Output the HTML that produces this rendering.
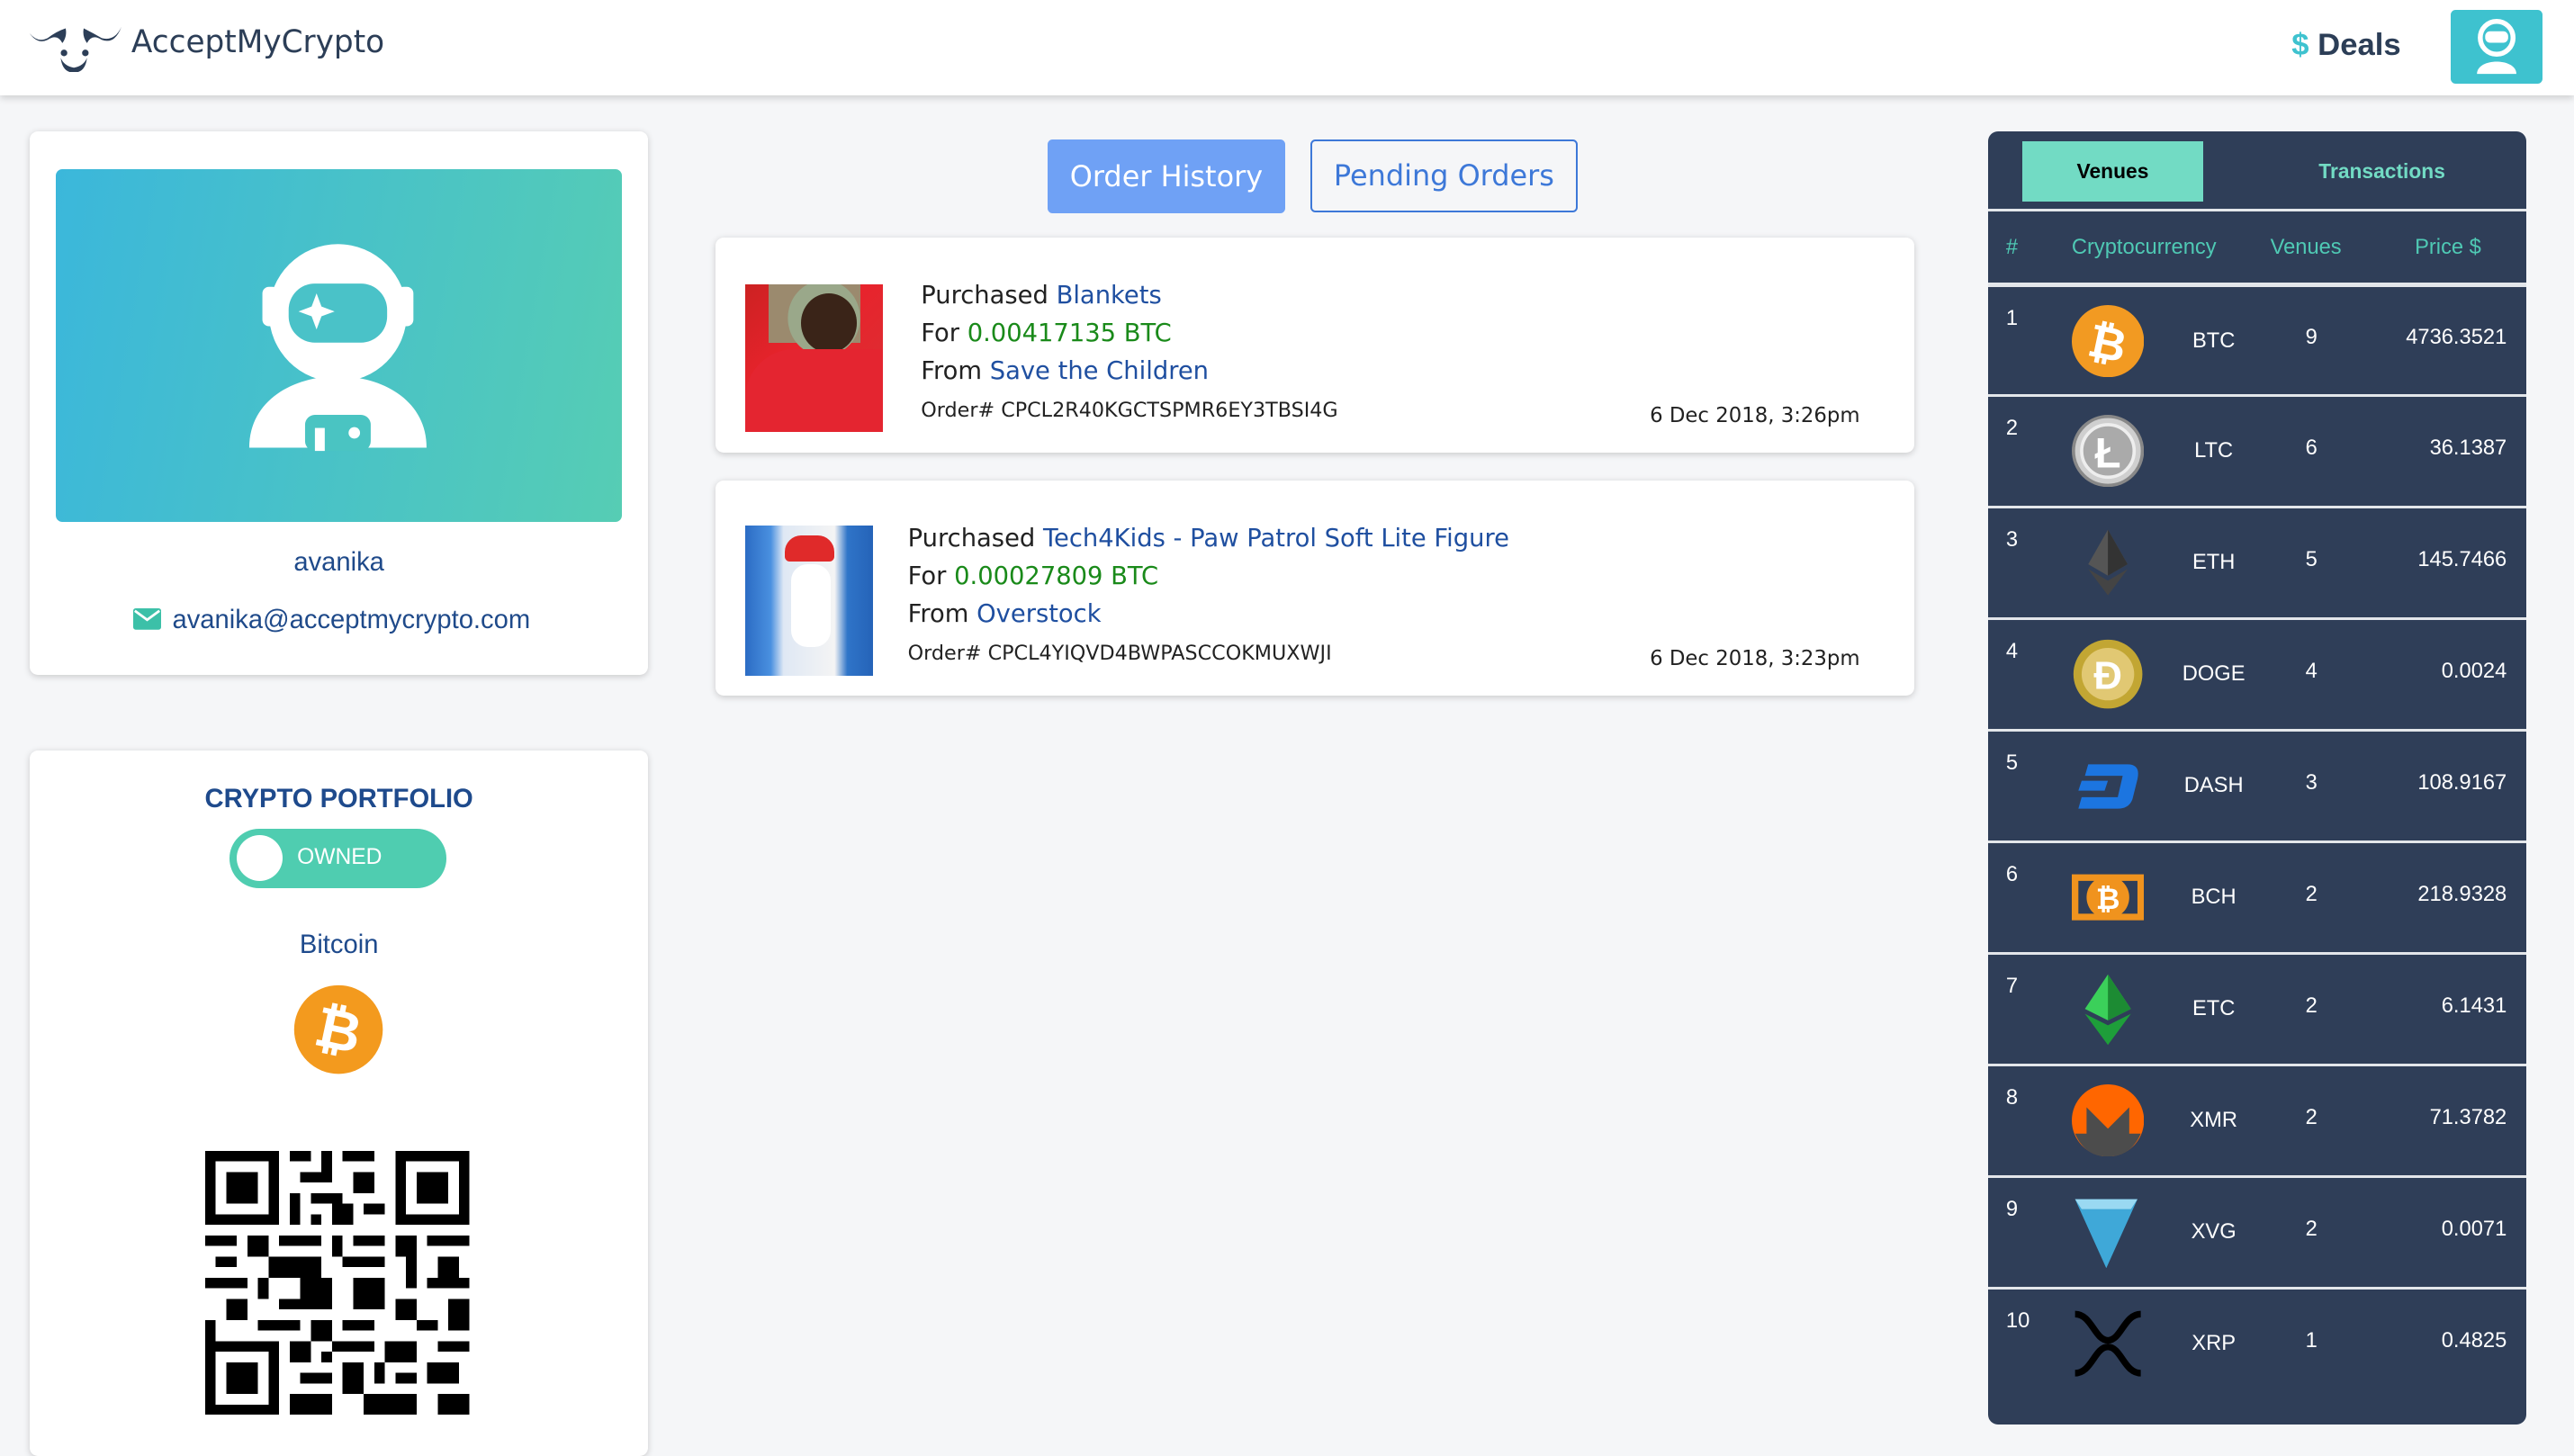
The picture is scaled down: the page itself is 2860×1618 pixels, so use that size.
<!DOCTYPE html>
<html><head><meta charset="utf-8"><style>
html{zoom:1.824}
body{margin:0;width:1568px;height:870px;background:#f5f6f8;font-family:"Liberation Sans",sans-serif;position:relative;overflow:hidden}
.abs{position:absolute}
.hdr{left:0;top:0;width:1568px;height:58px;background:#fff;box-shadow:0 2px 4px rgba(0,0,0,.15)}
.card{background:#fff;border-radius:5px;box-shadow:0 1px 4px rgba(0,0,0,.18)}
.ord{font-family:"DejaVu Sans",sans-serif;font-size:15px;color:#222;line-height:23px}
.ord .b{color:#1f4fa0}.ord .g{color:#1a8a1a}
.ord .n{font-size:12.2px;margin-top:1px}
.dt{font-family:"DejaVu Sans",sans-serif;font-size:12.5px;color:#222}
.panel{left:1211px;top:80px;width:328px;height:788px;background:#2f3e58;border-radius:6px;overflow:hidden}
.row{position:absolute;left:0;width:328px;height:66px;border-top:2px solid #e3e6ea;color:#fff;font-size:13px}
.row .i{position:absolute;left:11px;top:12px}
.row .s{position:absolute;left:100px;width:75px;text-align:center;top:26px}
.row .v{position:absolute;left:187px;width:20px;text-align:center;top:24px}
.row .p{position:absolute;right:12px;top:24px}
.row svg{position:absolute;left:51px;top:11px}
</style></head><body>
<div class="abs hdr">
 <svg class="abs" style="left:17px;top:14px" width="58" height="30" viewBox="0 0 58 30"><path d="M1 6 Q6 12 12 9 Q17 5 23 3 Q24 8 21 12 Q18 6 12 10 Q6 13 1 6Z" fill="#2c3e57"/><path d="M57 2 Q53 11 45 9 Q40 6 34 3 Q33 8 36 12 Q39 6 45 10 Q53 13 57 2Z" fill="#2c3e57"/><circle cx="22" cy="18" r="2" fill="#2c3e57"/><circle cx="35" cy="18" r="2" fill="#2c3e57"/><path d="M20 21 Q21 30 28 30 Q35 30 36 21 Q34 26 28 27 Q22 26 20 21Z" fill="#2c3e57"/></svg>
 <div class="abs" style="left:80px;top:15px;font-family:'DejaVu Sans',sans-serif;font-size:18.8px;color:#2c3e57">AcceptMyCrypto</div>
 <div class="abs" style="left:1396px;top:17px;font-size:19px;font-weight:bold;color:#2c3e57"><span style="color:#3ec2cf">$</span> Deals</div>
 <div class="abs" style="left:1493px;top:6px;width:56px;height:45px;background:#3ec2cf;border-radius:3px">
  <svg width="56" height="45" viewBox="0 0 56 45"><circle cx="28" cy="17" r="10" fill="none" stroke="#fff" stroke-width="3"/><rect x="21" y="13" width="14" height="7" rx="3" fill="#fff"/><path d="M16 39 C16 29 40 29 40 39Z" fill="#fff"/></svg>
 </div>
</div>

<div class="abs card" style="left:18px;top:80px;width:377px;height:331px">
 <div class="abs" style="left:16px;top:23px;width:345px;height:215px;border-radius:4px;background:linear-gradient(100deg,#3bb7db,#56cdb4)">
  <svg class="abs" style="left:112px;top:42px" width="120" height="130" viewBox="0 0 120 130"><circle cx="60" cy="46" r="42" fill="#fff"/><rect x="14" y="30" width="10" height="24" rx="4" fill="#fff"/><rect x="96" y="30" width="10" height="24" rx="4" fill="#fff"/><rect x="30" y="28" width="60" height="36" rx="16" fill="#4ac2c8"/><path d="M47 34 l3 8 8 3 -8 3 -3 8 -3 -8 -8 -3 8 -3z" fill="#fff"/><path d="M6 128 C6 70 114 70 114 128Z" fill="#fff"/><rect x="40" y="108" width="40" height="22" rx="6" fill="#4ac4c2"/><rect x="46" y="116" width="6" height="14" fill="#fff"/><circle cx="70" cy="119" r="3.5" fill="#fff"/></svg>
 </div>
 <div class="abs" style="left:0;width:377px;top:254px;text-align:center;font-size:16px;color:#1f4a8a">avanika</div>
 <div class="abs" style="left:63px;top:289px;font-size:16px;color:#1f4a8a;white-space:nowrap"><svg width="17" height="13" viewBox="0 0 17 13" style="vertical-align:-1px;margin-right:7px"><rect width="17" height="13" rx="1.5" fill="#3cc0a8"/><path d="M1 1.5 L8.5 7 L16 1.5" fill="none" stroke="#fff" stroke-width="1.5"/></svg>avanika@acceptmycrypto.com</div>
</div>

<div class="abs card" style="left:18px;top:457px;width:377px;height:430px">
 <div class="abs" style="left:0;width:377px;top:21px;text-align:center;font-size:16px;font-weight:bold;color:#1e4a8c">CRYPTO PORTFOLIO</div>
 <div class="abs" style="left:122px;top:48px;width:132px;height:36px;border-radius:18px;background:#4fcdb0">
  <div class="abs" style="left:4px;top:4px;width:28px;height:28px;border-radius:14px;background:#fff"></div>
  <div class="abs" style="left:41px;top:10px;color:#fff;font-size:13.5px">OWNED</div>
 </div>
 <div class="abs" style="left:0;width:377px;top:110px;text-align:center;font-size:16px;color:#1e4a8c">Bitcoin</div>
 <svg class="abs" style="left:160px;top:142px" width="56" height="56" viewBox="0 0 56 56"><circle cx="28" cy="28" r="27" fill="#f39a1e"/><text x="28" y="40" text-anchor="middle" font-family="Liberation Sans" font-weight="bold" font-size="34" fill="#fff" transform="rotate(12 28 28)">₿</text></svg>
 <svg class="abs" style="left:107px;top:244px" width="161" height="161" viewBox="0 0 25 25" shape-rendering="crispEdges">
  <g fill="#000">
   <path d="M0 0h7v7h-7zM18 0h7v7h-7zM0 18h7v7h-7z"/>
  </g>
  <g fill="#fff"><path d="M1 1h5v5h-5zM19 1h5v5h-5zM1 19h5v5h-5z"/></g>
  <g fill="#000"><path d="M2 2h3v3h-3zM20 2h3v3h-3zM2 20h3v3h-3z"/>
   <path d="M8 0h2v1h-2zM11 0h1v2h-1zM13 0h3v1h-3zM9 2h3v1h-3zM14 2h2v2h-2zM8 4h1v3h-1zM10 4h3v1h-3zM12 5h2v2h-2zM15 5h2v1h-2zM10 6h1v1h-1z"/>
   <path d="M0 8h3v1h-3zM4 8h2v2h-2zM7 8h4v1h-4zM12 8h1v2h-1zM14 8h3v1h-3zM18 8h2v2h-2zM21 8h4v1h-4zM1 10h2v1h-2zM6 10h5v2h-5zM13 10h4v1h-4zM19 10h1v3h-1zM22 10h2v2h-2z"/>
   <path d="M0 12h4v1h-4zM5 12h1v2h-1zM9 12h3v2h-3zM14 12h3v3h-3zM21 12h4v1h-4zM2 14h2v2h-2zM7 14h5v1h-5zM18 14h2v2h-2zM23 14h2v3h-2zM0 16h1v2h-1zM5 16h4v1h-4zM10 16h2v2h-2zM13 16h3v1h-3zM20 16h2v1h-2z"/>
   <path d="M8 18h2v2h-2zM12 18h4v1h-4zM17 18h3v2h-3zM22 18h3v1h-3zM9 21h3v1h-3zM13 20h2v3h-2zM16 20h1v2h-1zM21 20h3v2h-3zM8 23h4v2h-4zM15 23h5v2h-5zM18 21h2v1h-2zM22 23h3v2h-3zM11 19h1v1h-1z"/>
  </g>
 </svg>
</div>

<div class="abs" style="left:638px;top:85px;width:145px;height:45px;background:#6fa1f5;border-radius:3px;color:#fff;text-align:center;line-height:45px;font-family:'DejaVu Sans',sans-serif;font-size:17.5px">Order History</div>
<div class="abs" style="left:798px;top:85px;width:161px;height:42px;border:1.5px solid #3d78d8;border-radius:3px;color:#3d78d8;text-align:center;line-height:42px;font-family:'DejaVu Sans',sans-serif;font-size:17.5px">Pending Orders</div>

<div class="abs card" style="left:436px;top:145px;width:730px;height:131px">
 <div class="abs" style="left:18px;top:28px;width:84px;height:90px;background:linear-gradient(135deg,#c22 0%,#e8232c 40%,#e02a30 70%,#c21d26 100%);overflow:hidden">
  <div class="abs" style="left:14px;top:-4px;width:56px;height:40px;background:#9b8a6e"></div>
  <div class="abs" style="left:34px;top:6px;width:34px;height:36px;border-radius:50%;background:#3a2418;box-shadow:-3px -3px 0 5px #9aa88a"></div>
  <div class="abs" style="left:0;top:40px;width:84px;height:50px;background:#e42530;border-radius:30px 0 0 0"></div>
 </div>
 <div class="abs ord" style="left:125px;top:24px">Purchased <span class="b">Blankets</span><br>For <span class="g">0.00417135 BTC</span><br>From <span class="b">Save the Children</span><div class="n">Order# CPCL2R40KGCTSPMR6EY3TBSI4G</div></div>
 <div class="abs dt" style="left:569px;top:101px">6 Dec 2018, 3:26pm</div>
</div>
<div class="abs card" style="left:436px;top:293px;width:730px;height:131px">
 <div class="abs" style="left:18px;top:27px;width:78px;height:92px;background:linear-gradient(90deg,#2b6cc4,#4a90e0 20%,#dfe8f4 30%,#f4f4f4 70%,#2f74c8 80%,#2563b8)">
  <div class="abs" style="left:24px;top:6px;width:30px;height:16px;border-radius:10px 10px 3px 3px;background:#e02a2a"></div>
  <div class="abs" style="left:28px;top:24px;width:24px;height:50px;border-radius:10px;background:#fff"></div>
 </div>
 <div class="abs ord" style="left:117px;top:24px">Purchased <span class="b">Tech4Kids - Paw Patrol Soft Lite Figure</span><br>For <span class="g">0.00027809 BTC</span><br>From <span class="b">Overstock</span><div class="n">Order# CPCL4YIQVD4BWPASCCOKMUXWJI</div></div>
 <div class="abs dt" style="left:569px;top:101px">6 Dec 2018, 3:23pm</div>
</div>

<div class="abs panel">
 <div class="abs" style="left:21px;top:6px;width:110px;height:37px;background:#72dbc4;color:#000;font-weight:bold;font-size:12.5px;text-align:center;line-height:37px">Venues</div>
 <div class="abs" style="left:185px;top:6px;width:110px;line-height:37px;text-align:center;color:#72dbc4;font-weight:bold;font-size:12.5px">Transactions</div>
 <div class="abs" style="left:0;top:47px;width:328px;height:45px;border-top:2px solid #e3e6ea;color:#4fc9b4;font-size:13px">
  <span class="abs" style="left:11px;top:15px">#</span><span class="abs" style="left:51px;top:15px">Cryptocurrency</span><span class="abs" style="left:172px;top:15px">Venues</span><span class="abs" style="left:260px;top:15px">Price $</span>
 </div>
 <div class="row" style="top:92px;border-top-width:3px"><span class="i">1</span><svg width="44" height="44"><circle cx="22" cy="22" r="22" fill="#f29a22"/><text x="22" y="33" text-anchor="middle" font-family="Liberation Sans" font-weight="bold" font-size="28" fill="#fff" transform="rotate(12 22 22)">₿</text></svg><span class="s">BTC</span><span class="v">9</span><span class="p">4736.3521</span></div>
 <div class="row" style="top:160px"><span class="i">2</span><svg width="44" height="44"><circle cx="22" cy="22" r="21" fill="#cfcfcf" stroke="#888" stroke-width="2"/><circle cx="22" cy="22" r="16" fill="#aaa" stroke="#eee" stroke-width="2"/><text x="22" y="32" text-anchor="middle" font-family="Liberation Sans" font-weight="bold" font-size="26" fill="#fff">Ł</text></svg><span class="s">LTC</span><span class="v">6</span><span class="p">36.1387</span></div>
 <div class="row" style="top:228px"><span class="i">3</span><svg width="44" height="44"><path d="M22 2 L34 23 L22 30 L10 23Z" fill="#555"/><path d="M22 2 L34 23 L22 30Z" fill="#333"/><path d="M22 33 L34 26 L22 42 L10 26Z" fill="#444"/></svg><span class="s">ETH</span><span class="v">5</span><span class="p">145.7466</span></div>
 <div class="row" style="top:296px"><span class="i">4</span><svg width="44" height="44"><circle cx="22" cy="22" r="21" fill="#c2a633"/><circle cx="22" cy="22" r="16" fill="#e1c873"/><text x="22" y="31" text-anchor="middle" font-family="Liberation Sans" font-weight="bold" font-size="24" fill="#fff">Ð</text></svg><span class="s">DOGE</span><span class="v">4</span><span class="p">0.0024</span></div>
 <div class="row" style="top:364px"><span class="i">5</span><svg width="44" height="44"><path d="M10 9 H34 Q42 9 40 18 L37 30 Q35 36 28 36 H4 L6 29 H28 L31 16 H8Z" fill="#1c75e0"/><path d="M6 19 H22 L20 25 H4Z" fill="#1c75e0"/></svg><span class="s">DASH</span><span class="v">3</span><span class="p">108.9167</span></div>
 <div class="row" style="top:432px"><span class="i">6</span><svg width="44" height="44"><rect x="0" y="8" width="44" height="28" fill="#f0931e"/><rect x="4" y="12" width="36" height="20" fill="#2f3e58"/><circle cx="22" cy="22" r="13" fill="#f0931e"/><text x="22" y="29" text-anchor="middle" font-family="Liberation Sans" font-weight="bold" font-size="18" fill="#fff">₿</text></svg><span class="s">BCH</span><span class="v">2</span><span class="p">218.9328</span></div>
 <div class="row" style="top:500px"><span class="i">7</span><svg width="44" height="44"><path d="M22 1 L36 22 L22 29 L8 22Z" fill="#3bd05a"/><path d="M22 32 L36 25 L22 44 L8 25Z" fill="#1e9e3a"/><path d="M22 1 L36 22 L22 29Z" fill="#1c8b33"/></svg><span class="s">ETC</span><span class="v">2</span><span class="p">6.1431</span></div>
 <div class="row" style="top:568px"><span class="i">8</span><svg width="44" height="44"><circle cx="22" cy="22" r="22" fill="#ff6600"/><path d="M2 30 H9 V14 L22 27 L35 14 V30 H42 Q36 44 22 44 Q8 44 2 30Z" fill="#4c4c4c"/></svg><span class="s">XMR</span><span class="v">2</span><span class="p">71.3782</span></div>
 <div class="row" style="top:636px"><span class="i">9</span><svg width="44" height="44"><path d="M2 2 H40 L21 44Z" fill="#3fa8d8"/><path d="M2 2 H40 L36 8 H6Z" fill="#9ad9f2"/></svg><span class="s">XVG</span><span class="v">2</span><span class="p">0.0071</span></div>
 <div class="row" style="top:704px;height:84px"><span class="i">10</span><svg width="44" height="44"><path d="M2 4 C12 4 14 20 22 20 C30 20 32 4 42 4 M2 40 C12 40 14 24 22 24 C30 24 32 40 42 40" fill="none" stroke="#000" stroke-width="4"/></svg><span class="s">XRP</span><span class="v">1</span><span class="p">0.4825</span></div>
</div>
</body></html>
